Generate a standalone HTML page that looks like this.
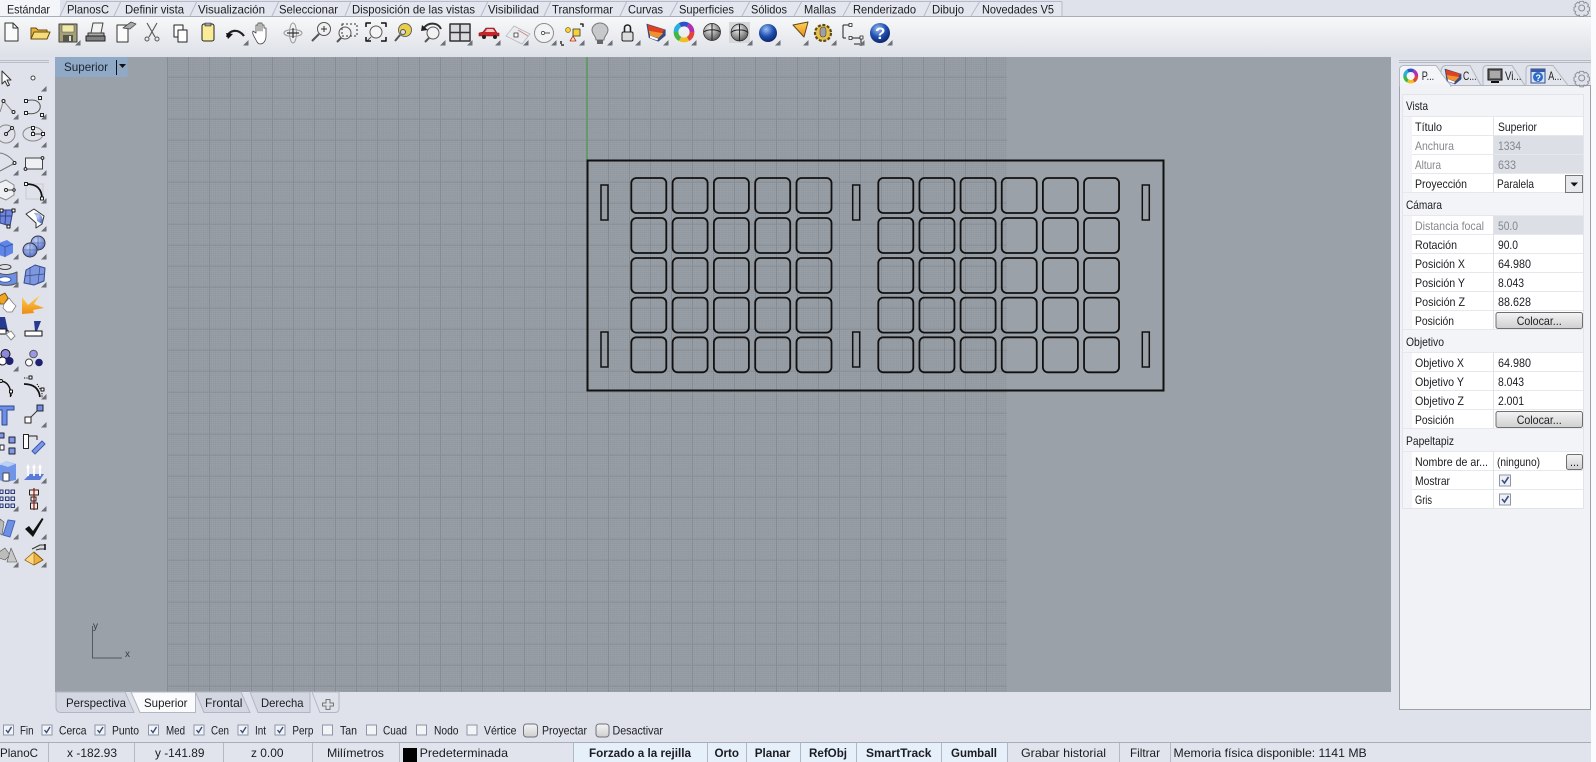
<!DOCTYPE html>
<html><head><meta charset="utf-8"><title>Rhino</title>
<style>
html,body{margin:0;padding:0;width:1596px;height:762px;overflow:hidden;background:#dfe2ea}
svg{display:block}
text{font-family:"Liberation Sans",sans-serif;font-size:12px;fill:#1c1c20}
.g{fill:#85878c}.b{font-weight:bold}
</style></head><body>
<svg width="1596" height="762" viewBox="0 0 1596 762" xmlns="http://www.w3.org/2000/svg">
<defs>
<linearGradient id="tb" x1="0" y1="0" x2="0" y2="1"><stop offset="0" stop-color="#f7f8f9"/><stop offset="1" stop-color="#dde0e7"/></linearGradient>
<linearGradient id="btn" x1="0" y1="0" x2="0" y2="1"><stop offset="0" stop-color="#f4f4f4"/><stop offset="1" stop-color="#cfcfcf"/></linearGradient>
<radialGradient id="sg" cx=".4" cy=".3" r=".8"><stop offset="0" stop-color="#f2f2f2"/><stop offset="1" stop-color="#4a4a4a"/></radialGradient>
<radialGradient id="sb" cx=".4" cy=".3" r=".8"><stop offset="0" stop-color="#9cc0f5"/><stop offset=".5" stop-color="#1f4fb0"/><stop offset="1" stop-color="#071a55"/></radialGradient>
<radialGradient id="sl" cx=".4" cy=".3" r=".8"><stop offset="0" stop-color="#c4d2f5"/><stop offset="1" stop-color="#4c68bf"/></radialGradient>
<linearGradient id="ob" x1="0" y1="0" x2="0" y2="1"><stop offset="0" stop-color="#ffd35a"/><stop offset="1" stop-color="#ef8a10"/></linearGradient>
<pattern id="fine" x="167" y="76.7" width="4.2" height="4.2" patternUnits="userSpaceOnUse"><rect width="4.2" height="4.2" fill="#9ba1a8"/><path d="M.5 0V4.2M2.6 0V4.2M0 .5H4.2M0 2.6H4.2" stroke="#90969d" stroke-width=".6"/></pattern>
<pattern id="maj" x="167" y="76.7" width="21" height="21" patternUnits="userSpaceOnUse"><path d="M.5 0V21M0 .5H21" stroke="#868c93" stroke-width="1"/></pattern>
<path id="tri" d="M5.5 0V5.5H0Z" fill="#6c6f76"/>
<rect id="rr" width="35" height="35" rx="5" ry="5" fill="none" stroke="#111" stroke-width="1.8"/>
<g id="r5"><use href="#rr" x="0"/><use href="#rr" x="41.3"/><use href="#rr" x="82.6"/><use href="#rr" x="123.9"/><use href="#rr" x="165.2"/></g>
<g id="r6"><use href="#rr" x="0"/><use href="#rr" x="41.15"/><use href="#rr" x="82.3"/><use href="#rr" x="123.45"/><use href="#rr" x="164.6"/><use href="#rr" x="205.75"/></g>
<g id="gear" fill="none" stroke="#8a8d94"><circle r="3"/><path d="M-2 -6.5h4l.6 2 2-1 2.8 2.8-1 2 2 .6v4l-2 .6 1 2-2.8 2.8-2-1-.6 2h-4l-.6-2-2 1-2.8-2.8 1-2-2-.6v-4l2-.6-1-2 2.8-2.8 2 1z" transform="translate(0,-.7) scale(.92)"/></g>
<g id="ring"><circle r="5" fill="none" stroke="#e0453a" stroke-width="3" stroke-dasharray="5.2 26"/><circle r="5" fill="none" stroke="#f0c020" stroke-width="3" stroke-dasharray="5.2 26" stroke-dashoffset="-5.2"/><circle r="5" fill="none" stroke="#42b648" stroke-width="3" stroke-dasharray="5.2 26" stroke-dashoffset="-10.4"/><circle r="5" fill="none" stroke="#28b0d8" stroke-width="3" stroke-dasharray="5.2 26" stroke-dashoffset="-15.6"/><circle r="5" fill="none" stroke="#3050c8" stroke-width="3" stroke-dasharray="5.2 26" stroke-dashoffset="-20.8"/><circle r="5" fill="none" stroke="#b030b0" stroke-width="3" stroke-dasharray="5.2 26" stroke-dashoffset="-26"/></g>
<g id="lay"><path d="M-8 -7L8 -2V3L2 8L-6 5Z" fill="#3a4a80"/><path d="M-7 -6L7 -2L5 1L-6 -1Z" fill="#e0401e"/><path d="M-6 -1L6 1L2 5L-5 3Z" fill="#f09030"/><path d="M-5 3L2 5.5L1 7L-5 5Z" fill="#fff"/></g>
</defs>

<!-- base -->
<rect width="1596" height="762" fill="#dfe2ea"/>
<rect x="1591" width="5" height="762" fill="#fafbfc"/>

<!-- top tabs -->
<rect x="0" y="0" width="60" height="16" fill="#f4f5f8"/>
<path d="M60 16L66 2H1062V16Z" fill="#e3e6ee"/>
<path d="M60 16L67 1M114 16L121 1M190 16L197 1M272 16L279 1M345 16L351 1M481 16L488 1M544 16L551 1M620 16L627 1M670 16L678 1M742 16L750 1M794 16L802 1M843 16L851 1M924 16L931 1M971 16L980 1M1062 16V2M66 1.5H1062" stroke="#b6bac7" fill="none"/>
<rect x="0" y="16" width="1591" height="1" fill="#a9adb9"/>
<g>
<text x="7" y="13.5" textLength="43" lengthAdjust="spacingAndGlyphs">Estándar</text>
<text x="67" y="13.5" textLength="42" lengthAdjust="spacingAndGlyphs">PlanosC</text>
<text x="125" y="13.5" textLength="59" lengthAdjust="spacingAndGlyphs">Definir vista</text>
<text x="198" y="13.5" textLength="67" lengthAdjust="spacingAndGlyphs">Visualización</text>
<text x="279" y="13.5" textLength="59" lengthAdjust="spacingAndGlyphs">Seleccionar</text>
<text x="352" y="13.5" textLength="123" lengthAdjust="spacingAndGlyphs">Disposición de las vistas</text>
<text x="488" y="13.5" textLength="51" lengthAdjust="spacingAndGlyphs">Visibilidad</text>
<text x="552" y="13.5" textLength="61" lengthAdjust="spacingAndGlyphs">Transformar</text>
<text x="628" y="13.5" textLength="35" lengthAdjust="spacingAndGlyphs">Curvas</text>
<text x="679" y="13.5" textLength="55" lengthAdjust="spacingAndGlyphs">Superficies</text>
<text x="751" y="13.5" textLength="36" lengthAdjust="spacingAndGlyphs">Sólidos</text>
<text x="804" y="13.5" textLength="32" lengthAdjust="spacingAndGlyphs">Mallas</text>
<text x="853" y="13.5" textLength="63" lengthAdjust="spacingAndGlyphs">Renderizado</text>
<text x="932" y="13.5" textLength="32" lengthAdjust="spacingAndGlyphs">Dibujo</text>
<text x="982" y="13.5" textLength="72" lengthAdjust="spacingAndGlyphs">Novedades V5</text>
</g>
<use href="#gear" x="1581.7" y="8"/>

<!-- main toolbar -->
<rect x="0" y="17" width="1591" height="40" fill="url(#tb)"/>
<g stroke-linejoin="round">
<path d="M5 23H13L18 28V41H5Z" fill="#fafafa" stroke="#333"/><path d="M13 23V28H18" fill="none" stroke="#333"/>
<path d="M31 39V28H36L38 30H47V39Z" fill="#e5b23a" stroke="#6a4d10"/><path d="M31 39L34 32H50L47 39Z" fill="#f6dd7c" stroke="#6a4d10"/>
<rect x="59" y="24" width="18" height="18" fill="#a3a078" stroke="#444"/><rect x="62" y="25" width="12" height="7" fill="#f1e9a8" stroke="#555" stroke-width=".6"/><rect x="63" y="35" width="10" height="7" fill="#55554a"/><rect x="69" y="36" width="2" height="5" fill="#ddd"/>
<path d="M88 33H104V41H88Z" fill="#aaa" stroke="#333"/><path d="M91 33L93 23H103L101 33Z" fill="#f3f3f3" stroke="#444"/><rect x="86" y="36" width="19" height="5" fill="#808080" stroke="#222"/>
<path d="M117 25H128V42H117Z" fill="#fbfbfb" stroke="#333"/><path d="M123 28L131 22L136 24L130 29Z" fill="#aaa" stroke="#444" stroke-width=".8"/>
<path d="M147 23L155 37M157 23L149 37" stroke="#555" fill="none" stroke-width="1.1"/><circle cx="147" cy="39" r="2" fill="none" stroke="#555"/><circle cx="157" cy="39" r="2" fill="none" stroke="#555"/>
<rect x="174" y="25" width="9" height="12" fill="#fff" stroke="#222"/><rect x="178" y="30" width="9" height="12" fill="#fff" stroke="#222"/>
<rect x="202" y="24" width="12" height="17" rx="2" fill="#fbeb98" stroke="#222"/><rect x="205" y="23" width="6" height="3" fill="#999" stroke="#222" stroke-width=".6"/>
<path d="M227 37C229 30 238 28 244 36" fill="none" stroke="#222" stroke-width="2.2"/><path d="M226 33L233 34L228 39Z" fill="#111"/>
<path d="M256 40C254 36 252 34 253 31L256 33V25H258V31V23H260V31V23H262V31V25H264V28H266V36C266 40 264 44 260 44C258 44 257 42 256 40Z" fill="#fff" stroke="#444" stroke-width=".8"/>
<ellipse cx="293" cy="33" rx="9" ry="3.5" fill="none" stroke="#999"/><ellipse cx="293" cy="33" rx="3.5" ry="10" fill="none" stroke="#999"/><path d="M293 28V38M287 33H299" stroke="#333" stroke-width="1.2"/>
<circle cx="324" cy="29" r="6.5" fill="#f2f2f2" stroke="#555"/><path d="M319 34L312 41" stroke="#555" stroke-width="2"/><path d="M321 29H327M324 26V32" stroke="#333"/>
<circle cx="345" cy="33" r="6" fill="#f2f2f2" stroke="#555"/><path d="M341 38L337 42" stroke="#555" stroke-width="2"/><rect x="342" y="24" width="15" height="12" fill="none" stroke="#333" stroke-dasharray="2 2"/>
<circle cx="376" cy="32" r="6" fill="#f5f5f5" stroke="#555"/><path d="M371 37L367 41" stroke="#555"/><path d="M366 27V23H371M381 23H386V27M386 37V41H381M371 41H366V37" fill="none" stroke="#111" stroke-width="1.5"/>
<circle cx="405" cy="30" r="6.5" fill="#e9cf48" stroke="#666"/><circle cx="403" cy="32" r="2.5" fill="#ddd" stroke="#555"/><path d="M400 35L395 41" stroke="#555" stroke-width="2"/>
<circle cx="433" cy="33" r="6" fill="#f2f2f2" stroke="#555"/><path d="M429 38L425 42" stroke="#555" stroke-width="2"/><path d="M424 28C428 22 438 22 441 29" fill="none" stroke="#333" stroke-width="2"/><path d="M422 25L428 30L421 31Z" fill="#222"/>
<rect x="450" y="24" width="20" height="17" fill="#d8dae0" stroke="#333" stroke-width="1.5"/><path d="M460 24V41M450 32.5H470" stroke="#333" stroke-width="1.5"/>
<path d="M479 36V33L483 32L486 28H494L497 33H499V36Z" fill="#c8242a" stroke="#7a1010" stroke-width=".6"/><circle cx="484" cy="37" r="2" fill="#222"/><circle cx="495" cy="37" r="2" fill="#222"/><path d="M487 29H493L495 32H485Z" fill="#f3c5c5"/>
<path d="M506 36L514 26L530 34L522 44Z" fill="#e9ebee" stroke="#b0b3ba" stroke-width=".7"/><path d="M518 30L528 36" stroke="#d08888"/><rect x="514" y="33" width="4" height="4" fill="#fff" stroke="#333" stroke-width=".8"/>
<circle cx="544" cy="33" r="9.5" fill="#f2f3f5" stroke="#8c8e93"/><circle cx="543" cy="33" r="1.6" fill="#fff" stroke="#333" stroke-width=".7"/><path d="M545 33H550" stroke="#555"/>
<circle cx="568" cy="30" r="2.5" fill="#f5d23a" stroke="#8a6d10" stroke-width=".7"/><rect x="573" y="29" width="7" height="7" fill="#f5d23a" stroke="#333" stroke-width=".8"/><path d="M570 41L573 36L576 41Z" fill="#fde0a0" stroke="#b03030" stroke-width=".8"/><path d="M580 24H583V27M561 44V41M561 45H564" stroke="#111" fill="none" stroke-width="1.3"/>
<path d="M600 23C605 23 608 27 608 30C608 34 604 36 604 40H596C596 36 592 34 592 30C592 27 595 23 600 23Z" fill="#c6c8cc" stroke="#777"/><rect x="597" y="40" width="6" height="4" fill="#666"/>
<rect x="622" y="32" width="11" height="9" rx="1.5" fill="#dcdcdc" stroke="#222"/><path d="M624.5 32V28C624.5 24 630.5 24 630.5 28V32" fill="none" stroke="#222" stroke-width="1.6"/>
<use href="#lay" transform="translate(656,32) scale(1.2)"/>
<use href="#ring" transform="translate(684,32) scale(1.6)"/>
<circle cx="712" cy="32" r="8.5" fill="url(#sg)" stroke="#222" stroke-width=".7"/><path d="M703.5 32C708 29 716 29 720.5 32M712 23.5V40.5" stroke="#222" fill="none"/>
<rect x="729" y="22" width="21" height="21" fill="#d6d7db"/><circle cx="739.5" cy="32.5" r="8.5" fill="url(#sg)" stroke="#222" stroke-width=".7"/><path d="M731 32.5C735 29 744 29 748 32.5M739.5 24V41" stroke="#222" fill="none"/>
<circle cx="768" cy="33" r="9" fill="url(#sb)"/>
<path d="M793 25L808 22L804 37Z" fill="url(#ob)" stroke="#5a4a20"/>
<circle cx="823" cy="33" r="8" fill="#e8c34a" stroke="#5c4a14" stroke-width="2.2" stroke-dasharray="3 1.6"/><rect x="820" y="27" width="6" height="10" rx="3" fill="#a0a0a4" stroke="#444" stroke-width=".6"/>
<path d="M843 25V38M843 25H851M843 38H846M852 38H861M861 38V46M854 44H860" fill="none" stroke="#222"/><rect x="849" y="23.5" width="3" height="3" fill="#fff" stroke="#222" stroke-width=".8"/><rect x="849" y="36.5" width="3" height="3" fill="#fff" stroke="#222" stroke-width=".8"/><rect x="860" y="36" width="3" height="3" fill="#fff" stroke="#222" stroke-width=".8"/>
<circle cx="880" cy="33" r="10" fill="url(#sb)"/><text x="875" y="39" style="font-size:17px;font-weight:bold;fill:#fff">?</text>
</g>
<g>
<use href="#tri" x="75" y="40"/><use href="#tri" x="243" y="40"/><use href="#tri" x="440" y="40"/><use href="#tri" x="467" y="40"/><use href="#tri" x="495" y="40"/><use href="#tri" x="523" y="40"/><use href="#tri" x="551" y="40"/><use href="#tri" x="579" y="40"/><use href="#tri" x="607" y="40"/><use href="#tri" x="635" y="40"/><use href="#tri" x="663" y="40"/><use href="#tri" x="691" y="40"/><use href="#tri" x="747" y="40"/><use href="#tri" x="775" y="40"/><use href="#tri" x="803" y="40"/><use href="#tri" x="831" y="40"/><use href="#tri" x="859" y="40"/><use href="#tri" x="887" y="40"/>
</g>

<!-- viewport -->
<rect x="55" y="57" width="1336" height="635" fill="#9ba1a8"/>
<rect x="167" y="57" width="840" height="635" fill="url(#fine)"/>
<rect x="167" y="57" width="840" height="635" fill="url(#maj)"/>
<path d="M587 57V160" stroke="#5f9c63" stroke-width="1.8"/>
<rect x="55" y="57" width="72.5" height="20" fill="#90a9c6"/>
<text x="64" y="71" textLength="44" lengthAdjust="spacingAndGlyphs" style="fill:#1c2430">Superior</text>
<path d="M116.5 60V75" stroke="#111"/><path d="M119 64H126L122.5 68Z" fill="#111"/>

<!-- drawing -->
<rect x="587.5" y="160.5" width="576" height="230" fill="none" stroke="#111" stroke-width="2"/>
<use href="#r5" x="631.3" y="178"/><use href="#r5" x="631.3" y="218"/><use href="#r5" x="631.3" y="258"/><use href="#r5" x="631.3" y="297.6"/><use href="#r5" x="631.3" y="337.3"/>
<use href="#r6" x="878.3" y="178"/><use href="#r6" x="878.3" y="218"/><use href="#r6" x="878.3" y="258"/><use href="#r6" x="878.3" y="297.6"/><use href="#r6" x="878.3" y="337.3"/>
<g fill="none" stroke="#111" stroke-width="1.5">
<rect x="601" y="185" width="7" height="35"/><rect x="601" y="332" width="7" height="35"/>
<rect x="852.7" y="185" width="7" height="35"/><rect x="852.7" y="332" width="7" height="35"/>
<rect x="1142.3" y="185" width="7" height="35"/><rect x="1142.3" y="332" width="7" height="35"/>
</g>
<!-- axis -->
<path d="M92.5 626V658H122" fill="none" stroke="#55595f"/>
<text x="93" y="629" style="font-size:10px;fill:#3a3d42">y</text>
<text x="125" y="657" style="font-size:10px;fill:#3a3d42">x</text>

<!-- left toolbar -->
<path d="M0 60.5H49M0 62.5H49" stroke="#b9bcc6"/>
<g stroke-linejoin="round">
<path d="M2 71V84L5 81L7.5 86L9.5 85L7 80H11Z" fill="#fff" stroke="#333"/>
<circle cx="33" cy="78" r="2" fill="#fff" stroke="#444"/>
<path d="M0 112L3.5 101L13 112" fill="none" stroke="#888"/><circle cx="3.5" cy="101" r="1.5" fill="#fff" stroke="#222"/><circle cx="13.5" cy="112" r="1.5" fill="#fff" stroke="#222"/>
<path d="M26 101C45 95 45 118 26 113" fill="none" stroke="#555"/><rect x="24.5" y="99.5" width="3" height="3" fill="#fff" stroke="#222"/><rect x="38.5" y="96.5" width="3" height="3" fill="#fff" stroke="#222"/><rect x="40.5" y="113.5" width="3" height="3" fill="#fff" stroke="#222"/><rect x="24.5" y="111.5" width="3" height="3" fill="#fff" stroke="#222"/>
<circle cx="6" cy="134" r="9" fill="none" stroke="#888"/><path d="M6 134L12 128" stroke="#222"/><circle cx="6" cy="134" r="1.5" fill="#fff" stroke="#222"/><circle cx="12" cy="128" r="1.5" fill="#fff" stroke="#222"/>
<ellipse cx="33" cy="134" rx="10" ry="7" fill="none" stroke="#888"/><path d="M33 128V134H43" stroke="#444" fill="none"/><rect x="31.5" y="126.5" width="3" height="3" fill="#fff" stroke="#222"/><rect x="31.5" y="132.5" width="3" height="3" fill="#fff" stroke="#222"/><rect x="41.5" y="132.5" width="3" height="3" fill="#fff" stroke="#222"/>
<path d="M0 153C7 154 12 159 15 163L0 171" fill="none" stroke="#777"/><circle cx="14.5" cy="163" r="1.5" fill="#fff" stroke="#222"/>
<rect x="25.5" y="158" width="17" height="11" fill="#eef0f3" stroke="#444"/><circle cx="42.5" cy="158" r="1.4" fill="#fff" stroke="#222"/><circle cx="25.5" cy="169" r="1.4" fill="#fff" stroke="#222"/>
<path d="M-1 183L6 180L14 185V195L6 200L-1 197Z" fill="#eef0f3" stroke="#888"/><path d="M6 190H13" stroke="#444"/><circle cx="6" cy="190" r="1.5" fill="#fff" stroke="#222"/><circle cx="14" cy="190" r="1.2" fill="#fff" stroke="#222"/>
<rect x="26" y="184" width="17" height="15" fill="none" stroke="#c9c9cc"/><path d="M26 184C36 184 42 188 42 199" fill="none" stroke="#111" stroke-width="1.8"/><rect x="24.5" y="182.5" width="3" height="3" fill="#fff" stroke="#222"/><rect x="40.5" y="197" width="3" height="3" fill="#fff" stroke="#222"/>
<path d="M0 210H13L10 226L0 223Z" fill="#6f86d8" stroke="#304090"/><path d="M0 216H12M6 210L5 224" stroke="#304090"/><rect x="0" y="209" width="3" height="3" fill="#fff" stroke="#111"/><rect x="12" y="209" width="3" height="3" fill="#fff" stroke="#111"/><rect x="7" y="225" width="3" height="3" fill="#fff" stroke="#111"/>
<path d="M26 214L34 209L44 216L42 224L36 228V223Z" fill="#fff" stroke="#333"/><path d="M34 213C41 212 44 218 42 224L37 221C37 218 36 215 34 213Z" fill="url(#sl)"/>
<path d="M-1 243L7 240L13 244V253L5 257L-1 255Z" fill="#5f86e6"/><path d="M-1 244L5 247V257M5 247L13 244" stroke="#3a5ab0" fill="none"/>
<circle cx="38" cy="243" r="7" fill="url(#sl)" stroke="#334"/><circle cx="30" cy="250" r="7" fill="url(#sl)" stroke="#334"/><path d="M31 243H45M38 236V250M23 250H37M30 243V257" stroke="#445a9e" stroke-width=".6"/>
<ellipse cx="5" cy="267" rx="6" ry="2.5" fill="none" stroke="#444"/><path d="M-1 273C5 276 13 274 17 272V283C11 286 3 286 -1 284Z" fill="#6e8fe2" stroke="#555"/><ellipse cx="5" cy="279.500" rx="6" ry="2.800" fill="#fff" stroke="#3a5ab0"/>
<path d="M26 270L35 265L45 268L44 281L34 285L24 283Z" fill="#7f97dd" stroke="#334a90"/><path d="M30 267L30 284M40 266L38 283M25 276L44 274" stroke="#334a90" stroke-width=".7"/>
<path d="M-1 296L5 293L8 298L4 304H0Z" fill="#f0a51e" stroke="#6a4a10" stroke-width=".8"/><path d="M4 304L9 298L13 303L16 306L12 312H7L3 308Z" fill="#fff" stroke="#777" stroke-width=".7"/>
<path d="M22 314V297L28 305L40 295L34 304L44 308L33 310L34 313Z" fill="url(#ob)"/>
<path d="M5 320H0L-1 334H8Z" fill="#273a92" transform="translate(0,-3)"/><path d="M0 331H9" stroke="#111"/><rect x="-1" y="329" width="7" height="5" fill="#fff" stroke="#111" stroke-width=".9"/><path d="M6 334L11 331L15 336L11 340Z" fill="#fff" stroke="#888"/>
<path d="M34 321H41L37 331H35Z" fill="#273a92"/><rect x="25" y="331" width="17" height="5" fill="#fff" stroke="#111"/>
<circle cx="5.500" cy="354" r="4.500" fill="#8c88dc" stroke="#111"/><circle cx="2.500" cy="361" r="4" fill="#fff" stroke="#111"/><circle cx="9.500" cy="361" r="4" fill="#1f2270"/>
<circle cx="33.500" cy="354" r="3.800" fill="#9a98e4" stroke="#555"/><circle cx="29" cy="362.500" r="3.500" fill="#fff" stroke="#444"/><circle cx="39" cy="362.500" r="3.800" fill="#1f2270"/>
<path d="M0 381C7 381 11 387 11 396" fill="none" stroke="#111" stroke-width="1.500"/><circle cx="1" cy="381" r="1.500" fill="#fff" stroke="#111"/><rect x="9.500" y="390" width="3" height="3" fill="#fff" stroke="#111"/><path d="M10.500 394V397" stroke="#111" stroke-width="1.300"/>
<path d="M24 384C34 384 39 389 40 397" fill="none" stroke="#111" stroke-width="1.700"/><path d="M24 378H29M37 384L42 392M42 393V398" stroke="#111" stroke-dasharray="1.200 1.200" fill="none"/><rect x="29" y="376" width="3" height="3" fill="#fff" stroke="#111"/><rect x="41" y="388" width="3" height="3" fill="#fff" stroke="#111"/>
<path d="M-1 406H14V410L7 410V425H2V410H-1Z" fill="#6e8fe2" stroke="#2b4a99"/>
<rect x="25" y="417" width="6" height="6" fill="#fff" stroke="#222"/><rect x="37" y="405" width="6" height="6" fill="#6e8fe2" stroke="#223"/><path d="M31 417L37 411" stroke="#333"/>
<rect x="-1" y="433" width="5" height="5" fill="#7e97e6" stroke="#223"/><rect x="9" y="437" width="6" height="6" fill="#7e97e6" stroke="#223"/><rect x="0" y="445" width="4" height="5" fill="#fff" stroke="#223"/><rect x="9" y="448" width="6" height="6" fill="#7e97e6" stroke="#223"/>
<rect x="23.500" y="434.500" width="5" height="14" fill="#fff" stroke="#222"/><path d="M28 436H37V440" fill="none" stroke="#222"/><path d="M32 451L42 441L45 444L35 454Z" fill="#7e97e6" stroke="#3a5ab0"/>
<path d="M-1 466L6 461L16 464V480L6 482L-1 480Z" fill="#6f94e8"/><path d="M-1 464L6 461L15 464L8 467Z" fill="#bcd0f6"/><rect x="3" y="473" width="6" height="8" fill="#fff" stroke="#444"/>
<path d="M24 480L30 474H44L40 480Z" fill="#5a7bd6"/><path d="M28 466V476M34 466V476M40 466V476" stroke="#fff" stroke-width="1.800"/><path d="M26 468L28 464L30 468ZM32 468L34 464L36 468ZM38 468L40 464L42 468Z" fill="#fff"/>
<g fill="none" stroke="#2c3a7a" stroke-width="1.100"><rect x="0" y="490" width="3" height="3.500"/><rect x="5.500" y="490" width="3.500" height="3.500"/><rect x="11" y="490" width="3.500" height="3.500"/><rect x="0" y="497" width="3" height="3.500"/><rect x="5.500" y="497" width="3.500" height="3.500"/><rect x="11" y="497" width="3.500" height="3.500"/><rect x="0" y="504" width="3" height="3.500"/><rect x="5.500" y="504" width="3.500" height="3.500"/><rect x="11" y="504" width="3.500" height="3.500"/></g>
<rect x="29.500" y="490" width="9" height="5" fill="#fde4da" stroke="#222"/><rect x="31" y="497" width="5" height="4" fill="#fde4da" stroke="#222"/><rect x="30.500" y="503" width="7" height="6" fill="#fde4da" stroke="#222"/><path d="M34 488V510" stroke="#8e2020" stroke-width="1.300"/>
<path d="M0 519L4 522L2 535L-1 533Z" fill="#bbb" stroke="#555" stroke-width=".6"/><path d="M8 520L15 521L10 537L3 535Z" fill="#6e8fe2" stroke="#4466bb"/>
<path d="M25 529L29 526L33 531L42 518L43.500 519L33 537Z" fill="#111"/>
<path d="M-1 552L5 548L10 555L5 560L-1 558Z" fill="#bcbcbc" stroke="#555" stroke-width=".6"/><path d="M11 548L17 562H7Z" fill="#c8c8c8" stroke="#555" stroke-width=".6"/>
<path d="M25 560L34 552L43 560L34 565Z" fill="#f0b040" stroke="#7a5a10"/><path d="M25 560L34 552L34 565Z" fill="#ffd680" stroke="#7a5a10" stroke-width=".5"/><path d="M32 549L40 545H45V549H40L36 550" fill="#ddd" stroke="#333"/><path d="M45 544V550" stroke="#111" stroke-width="1.500"/>
</g>
<g>
<use href="#tri" x="41" y="86"/>
<use href="#tri" x="13" y="114"/><use href="#tri" x="41" y="114"/>
<use href="#tri" x="13" y="142"/><use href="#tri" x="41" y="142"/>
<use href="#tri" x="13" y="170"/><use href="#tri" x="41" y="170"/>
<use href="#tri" x="13" y="198"/><use href="#tri" x="41" y="198"/>
<use href="#tri" x="13" y="226"/><use href="#tri" x="41" y="226"/>
<use href="#tri" x="13" y="254"/><use href="#tri" x="41" y="254"/>
<use href="#tri" x="13" y="282"/><use href="#tri" x="41" y="282"/>
<use href="#tri" x="13" y="366"/>
<use href="#tri" x="41" y="394"/><use href="#tri" x="41" y="422"/>
<use href="#tri" x="13" y="478"/><use href="#tri" x="41" y="478"/>
<use href="#tri" x="13" y="506"/><use href="#tri" x="41" y="506"/>
<use href="#tri" x="13" y="534"/><use href="#tri" x="41" y="534"/>
<use href="#tri" x="13" y="562"/><use href="#tri" x="41" y="562"/>
</g>

<!-- right panel -->
<path d="M1399 60.500H1591M1399 62.500H1591" stroke="#b7bac4"/>
<rect x="1399.500" y="85.500" width="191" height="624" fill="#f1f2f6" stroke="#9da1ad"/>
<path d="M1399.500 86V70Q1399.500 65.500 1404 65.500H1436L1451 86Z" fill="#f4f5f8" stroke="#b3b6c1"/>
<rect x="1400" y="84" width="50" height="3" fill="#f1f2f6"/>
<path d="M1441 73Q1441 65.500 1446 65.500H1470L1481 85.500H1451Z" fill="#e3e5ec" stroke="#b3b6c1"/>
<path d="M1483 85.500V70Q1483 65.500 1487 65.500H1512L1525 85.500Z" fill="#e3e5ec" stroke="#b3b6c1"/>
<path d="M1526 85.500V70Q1526 65.500 1530 65.500H1553L1568 85.500Z" fill="#e3e5ec" stroke="#b3b6c1"/>
<use href="#ring" transform="translate(1410.700,76) scale(1.150)"/>
<use href="#lay" transform="translate(1453,76) scale(1.05)"/>
<rect x="1488" y="69" width="14" height="11" fill="#666" stroke="#111"/><rect x="1490" y="71" width="10" height="7" fill="#aaa"/><rect x="1491" y="81" width="8" height="2" fill="#111"/>
<rect x="1531" y="69" width="14" height="14" fill="#d6e2f8" stroke="#35508c"/><rect x="1531" y="69" width="14" height="3" fill="#3a5aa8"/><circle cx="1538" cy="77" r="5" fill="#2c6cc8"/><text x="1535.500" y="81" style="font-size:9px;font-weight:bold;fill:#fff">?</text>
<text x="1421.700" y="80" textLength="12.500" lengthAdjust="spacingAndGlyphs">P...</text>
<text x="1463" y="80" textLength="13.500" lengthAdjust="spacingAndGlyphs">C...</text>
<text x="1505" y="80" textLength="16.500" lengthAdjust="spacingAndGlyphs">Vi...</text>
<text x="1548.300" y="80" textLength="13.500" lengthAdjust="spacingAndGlyphs">A...</text>
<use href="#gear" x="1581.700" y="78"/>

<!-- grid -->
<rect x="1402.500" y="94.500" width="181" height="414" fill="#f3f4f7" stroke="#e2e4ea"/>
<g fill="#fff">
<rect x="1412" y="117" width="171" height="76"/>
<rect x="1412" y="215" width="171" height="114.500"/>
<rect x="1412" y="353" width="171" height="76"/>
<rect x="1412" y="452" width="171" height="56"/>
</g>
<g fill="#dcdfe6"><rect x="1494" y="136" width="89" height="38"/><rect x="1494" y="215" width="89" height="19"/></g>
<path d="M1403 116.500H1583M1412 135.500H1583M1412 154.500H1583M1412 173.500H1583M1403 192.500H1583M1403 215.500H1583M1412 234.500H1583M1412 253.500H1583M1412 272.500H1583M1412 291.500H1583M1412 310.500H1583M1403 329.500H1583M1403 352.500H1583M1412 371.500H1583M1412 390.500H1583M1412 409.500H1583M1403 428.500H1583M1403 451.500H1583M1412 470.500H1583M1412 489.500H1583" stroke="#e6e8ed"/>
<path d="M1493.500 117V193M1493.500 215V329M1493.500 353V428M1493.500 452V508" stroke="#e0e2e8"/>

<g>
<text x="1406" y="110" textLength="22" lengthAdjust="spacingAndGlyphs">Vista</text>
<text x="1415" y="131" textLength="27" lengthAdjust="spacingAndGlyphs">Título</text>
<text x="1498" y="131" textLength="39" lengthAdjust="spacingAndGlyphs">Superior</text>
<text class="g" x="1415" y="150" textLength="39" lengthAdjust="spacingAndGlyphs">Anchura</text>
<text class="g" x="1498" y="150" textLength="23" lengthAdjust="spacingAndGlyphs">1334</text>
<text class="g" x="1415" y="169" textLength="26" lengthAdjust="spacingAndGlyphs">Altura</text>
<text class="g" x="1498" y="169" textLength="18" lengthAdjust="spacingAndGlyphs">633</text>
<text x="1415" y="188" textLength="52" lengthAdjust="spacingAndGlyphs">Proyección</text>
<text x="1497" y="188" textLength="37" lengthAdjust="spacingAndGlyphs">Paralela</text>
<text x="1406" y="209" textLength="36" lengthAdjust="spacingAndGlyphs">Cámara</text>
<text class="g" x="1415" y="230" textLength="69" lengthAdjust="spacingAndGlyphs">Distancia focal</text>
<text class="g" x="1498" y="230" textLength="20" lengthAdjust="spacingAndGlyphs">50.0</text>
<text x="1415" y="249" textLength="42" lengthAdjust="spacingAndGlyphs">Rotación</text>
<text x="1498" y="249" textLength="20" lengthAdjust="spacingAndGlyphs">90.0</text>
<text x="1415" y="268" textLength="50" lengthAdjust="spacingAndGlyphs">Posición X</text>
<text x="1498" y="268" textLength="33" lengthAdjust="spacingAndGlyphs">64.980</text>
<text x="1415" y="287" textLength="50" lengthAdjust="spacingAndGlyphs">Posición Y</text>
<text x="1498" y="287" textLength="26" lengthAdjust="spacingAndGlyphs">8.043</text>
<text x="1415" y="306" textLength="50" lengthAdjust="spacingAndGlyphs">Posición Z</text>
<text x="1498" y="306" textLength="33" lengthAdjust="spacingAndGlyphs">88.628</text>
<text x="1415" y="325" textLength="39" lengthAdjust="spacingAndGlyphs">Posición</text>
<text x="1406" y="346" textLength="38" lengthAdjust="spacingAndGlyphs">Objetivo</text>
<text x="1415" y="367" textLength="49" lengthAdjust="spacingAndGlyphs">Objetivo X</text>
<text x="1498" y="367" textLength="33" lengthAdjust="spacingAndGlyphs">64.980</text>
<text x="1415" y="386" textLength="49" lengthAdjust="spacingAndGlyphs">Objetivo Y</text>
<text x="1498" y="386" textLength="26" lengthAdjust="spacingAndGlyphs">8.043</text>
<text x="1415" y="405" textLength="49" lengthAdjust="spacingAndGlyphs">Objetivo Z</text>
<text x="1498" y="405" textLength="26" lengthAdjust="spacingAndGlyphs">2.001</text>
<text x="1415" y="424" textLength="39" lengthAdjust="spacingAndGlyphs">Posición</text>
<text x="1406" y="445" textLength="48" lengthAdjust="spacingAndGlyphs">Papeltapiz</text>
<text x="1415" y="466" textLength="73" lengthAdjust="spacingAndGlyphs">Nombre de ar...</text>
<text x="1497" y="466" textLength="43" lengthAdjust="spacingAndGlyphs">(ninguno)</text>
<text x="1415" y="485" textLength="35" lengthAdjust="spacingAndGlyphs">Mostrar</text>
<text x="1415" y="504" textLength="17" lengthAdjust="spacingAndGlyphs">Gris</text>
</g>
<rect x="1565.500" y="175.500" width="17" height="17" fill="#e8e9ec" stroke="#777"/><path d="M1570.500 182.500H1578L1574.200 186.500Z" fill="#111"/>
<rect x="1496" y="312.500" width="86.500" height="16" rx="2" fill="url(#btn)" stroke="#6f6f6f"/>
<text x="1516.700" y="325" textLength="45" lengthAdjust="spacingAndGlyphs">Colocar...</text>
<rect x="1496" y="411.500" width="86.500" height="16" rx="2" fill="url(#btn)" stroke="#6f6f6f"/>
<text x="1516.700" y="424" textLength="45" lengthAdjust="spacingAndGlyphs">Colocar...</text>
<rect x="1566.500" y="454.500" width="16" height="15" rx="2" fill="url(#btn)" stroke="#6f6f6f"/>
<text x="1570" y="466" textLength="9" lengthAdjust="spacingAndGlyphs">...</text>
<g fill="#f0f1f5" stroke="#8e96a6"><rect x="1499.500" y="475" width="11" height="11"/><rect x="1499.500" y="494" width="11" height="11"/></g>
<g fill="none" stroke="#3c4f8c" stroke-width="1.600"><path d="M1502 480L1504.500 483L1508.500 477"/><path d="M1502 499L1504.500 502L1508.500 496"/></g>

<!-- viewport tabs -->
<path d="M56 692V707Q56 712.500 61 712.500H134L125 692Z" fill="#d3d7e2" stroke="#b3b6c2"/>
<path d="M195.500 692L204 712.500H250L241 692Z" fill="#d3d7e2" stroke="#b3b6c2"/>
<path d="M250 692L258 712.500H310V692Z" fill="#d3d7e2" stroke="#b3b6c2"/>
<path d="M312 692L320 712.500H335Q339 712.500 339 708V692Z" fill="#dfe2ea" stroke="#b3b6c2"/>
<path d="M131 692L140 712.500H195.500V692Z" fill="#fafbfc" stroke="#b3b6c2"/>
<text x="66" y="707" textLength="60" lengthAdjust="spacingAndGlyphs">Perspectiva</text>
<text x="144" y="707" textLength="43.500" lengthAdjust="spacingAndGlyphs">Superior</text>
<text x="205" y="707" textLength="37.500" lengthAdjust="spacingAndGlyphs">Frontal</text>
<text x="261" y="707" textLength="42.500" lengthAdjust="spacingAndGlyphs">Derecha</text>
<path d="M326 699.500H330V703H333.500V706H330V709.500H326V706H322.500V703H326Z" fill="none" stroke="#777"/>

<!-- osnap -->
<g fill="#f3f4f6" stroke="#8d95a6">
<rect x="3.500" y="725" width="10" height="10"/><rect x="42" y="725" width="10" height="10"/><rect x="95" y="725" width="10" height="10"/><rect x="148.500" y="725" width="10" height="10"/><rect x="194" y="725" width="10" height="10"/><rect x="238" y="725" width="10" height="10"/><rect x="275" y="725" width="10" height="10"/>
<rect x="322.500" y="725" width="10" height="10"/><rect x="366.500" y="725" width="10" height="10"/><rect x="416.500" y="725" width="10" height="10"/><rect x="467" y="725" width="10" height="10"/>
</g>
<g fill="none" stroke="#37497f" stroke-width="1.400">
<path d="M6 730L8 732.500L11.500 727"/><path d="M44.500 730L46.500 732.500L50 727"/><path d="M97.500 730L99.500 732.500L103 727"/><path d="M151 730L153 732.500L156.500 727"/><path d="M196.500 730L198.500 732.500L202 727"/><path d="M240.500 730L242.500 732.500L246 727"/><path d="M277.500 730L279.500 732.500L283 727"/>
</g>
<rect x="523.500" y="724" width="14" height="13" rx="3" fill="url(#btn)" stroke="#6f7280"/>
<rect x="596" y="724" width="13" height="13" rx="3" fill="url(#btn)" stroke="#6f7280"/>
<g>
<text x="20" y="734.500" textLength="13.500" lengthAdjust="spacingAndGlyphs">Fin</text>
<text x="59" y="734.500" textLength="27.500" lengthAdjust="spacingAndGlyphs">Cerca</text>
<text x="112" y="734.500" textLength="27" lengthAdjust="spacingAndGlyphs">Punto</text>
<text x="166" y="734.500" textLength="19" lengthAdjust="spacingAndGlyphs">Med</text>
<text x="211" y="734.500" textLength="18" lengthAdjust="spacingAndGlyphs">Cen</text>
<text x="255" y="734.500" textLength="11" lengthAdjust="spacingAndGlyphs">Int</text>
<text x="292.400" y="734.500" textLength="21" lengthAdjust="spacingAndGlyphs">Perp</text>
<text x="340" y="734.500" textLength="17" lengthAdjust="spacingAndGlyphs">Tan</text>
<text x="383" y="734.500" textLength="24" lengthAdjust="spacingAndGlyphs">Cuad</text>
<text x="434" y="734.500" textLength="24.500" lengthAdjust="spacingAndGlyphs">Nodo</text>
<text x="484" y="734.500" textLength="32.500" lengthAdjust="spacingAndGlyphs">Vértice</text>
<text x="542" y="734.500" textLength="45" lengthAdjust="spacingAndGlyphs">Proyectar</text>
<text x="612.500" y="734.500" textLength="50.500" lengthAdjust="spacingAndGlyphs">Desactivar</text>
</g>

<!-- status bar -->
<rect x="0" y="742" width="1591" height="20" fill="#e1e4ec"/>
<rect x="573" y="743" width="434" height="19" fill="#e5f0fb"/>
<path d="M0 742.500H1591" stroke="#a9adb9"/>
<path d="M48.500 743V762M134.500 743V762M223.500 743V762M312.500 743V762M399.500 743V762M573.500 743V762M707.500 743V762M746.500 743V762M800.500 743V762M856.500 743V762M941.500 743V762M1007.500 743V762M1119.500 743V762M1170.500 743V762" stroke="#b4b8c3"/>
<rect x="403" y="748" width="14" height="14" fill="#000"/>
<g>
<text x="0" y="757" textLength="38" lengthAdjust="spacingAndGlyphs">PlanoC</text>
<text x="67" y="757" textLength="50" lengthAdjust="spacingAndGlyphs">x -182.93</text>
<text x="155" y="757" textLength="49.500" lengthAdjust="spacingAndGlyphs">y -141.89</text>
<text x="251" y="757" textLength="32.500" lengthAdjust="spacingAndGlyphs">z 0.00</text>
<text x="327" y="757" textLength="57" lengthAdjust="spacingAndGlyphs">Milímetros</text>
<text x="419.600" y="757" textLength="88.400" lengthAdjust="spacingAndGlyphs">Predeterminada</text>
<text class="b" x="589" y="757" textLength="102" lengthAdjust="spacingAndGlyphs">Forzado a la rejilla</text>
<text class="b" x="714.500" y="757" textLength="24.500" lengthAdjust="spacingAndGlyphs">Orto</text>
<text class="b" x="754.700" y="757" textLength="35.700" lengthAdjust="spacingAndGlyphs">Planar</text>
<text class="b" x="809" y="757" textLength="38" lengthAdjust="spacingAndGlyphs">RefObj</text>
<text class="b" x="866" y="757" textLength="65.500" lengthAdjust="spacingAndGlyphs">SmartTrack</text>
<text class="b" x="951" y="757" textLength="46" lengthAdjust="spacingAndGlyphs">Gumball</text>
<text x="1021" y="757" textLength="85" lengthAdjust="spacingAndGlyphs">Grabar historial</text>
<text x="1130" y="757" textLength="30" lengthAdjust="spacingAndGlyphs">Filtrar</text>
<text x="1173.500" y="757" textLength="193.200" lengthAdjust="spacingAndGlyphs">Memoria física disponible: 1141 MB</text>
</g>
</svg>
</body></html>
